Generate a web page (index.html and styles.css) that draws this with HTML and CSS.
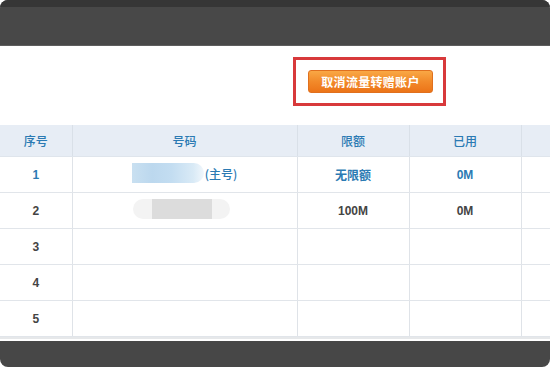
FILE: index.html
```html
<!DOCTYPE html>
<html lang="zh">
<head>
<meta charset="utf-8">
<title>流量转赠</title>
<link rel="stylesheet" href="styles.css">
</head>
<body>
<div class="frame">
  <div class="topbar"><div class="topstrip"></div></div>
  <div class="content">
    <div class="actions">
      <div class="highlight">
        <button class="btn-cancel" type="button">取消流量转赠账户</button>
      </div>
    </div>
    <table class="grid">
      <colgroup>
        <col class="c1"><col class="c2"><col class="c3"><col class="c4"><col class="c5">
      </colgroup>
      <thead>
        <tr><th>序号</th><th>号码</th><th>限额</th><th>已用</th><th></th></tr>
      </thead>
      <tbody>
        <tr class="main">
          <td>1</td>
          <td><span class="num"><span class="blur blue"></span><span class="tag">(主号)</span></span></td>
          <td>无限额</td>
          <td>0M</td>
          <td></td>
        </tr>
        <tr>
          <td>2</td>
          <td><span class="num"><span class="blur grey"><span class="blur-inner"></span></span></span></td>
          <td>100M</td>
          <td>0M</td>
          <td></td>
        </tr>
        <tr><td>3</td><td></td><td></td><td></td><td></td></tr>
        <tr><td>4</td><td></td><td></td><td></td><td></td></tr>
        <tr><td>5</td><td></td><td></td><td></td><td></td></tr>
      </tbody>
    </table>
    <div class="tablefoot"></div>
  </div>
  <div class="bottombar"></div>
</div>
</body>
</html>
```

FILE: styles.css
```css
html, body {
  margin: 0;
  padding: 0;
  background: #ffffff;
  overflow: hidden;
}

body {
  font-family: "Liberation Sans", "Noto Sans CJK SC", sans-serif;
  width: 550px;
  height: 367px;
}

.frame {
  width: 550px;
  height: 367px;
  display: flex;
  flex-direction: column;
  overflow: hidden;
}

.topbar {
  height: 45px;
  background: #484848;
  border-bottom: 1px solid #5e5e5e;
  border-radius: 8px 8px 0 0;
  overflow: hidden;
  flex: none;
}

.topstrip {
  height: 7px;
  background: #363636;
}

.content {
  flex: 1;
  background: #ffffff;
  display: flex;
  flex-direction: column;
}

.actions {
  height: 79px;
  padding: 11px 0 0 293px;
  box-sizing: border-box;
  display: flex;
  align-items: flex-start;
}

.highlight {
  width: 153px;
  height: 49px;
  box-sizing: border-box;
  border: 3px solid #d8393b;
  display: flex;
  align-items: center;
  padding-left: 12px;
}

.btn-cancel {
  width: 125px;
  height: 23px;
  border: 1px solid #e0701e;
  border-radius: 3px;
  background: linear-gradient(#f9a845, #f28a2a 50%, #ec7418);
  color: #ffffff;
  font-family: "Noto Sans CJK SC", sans-serif;
  font-weight: bold;
  font-size: 12px;
  padding: 0;
  letter-spacing: 0.3px;
  line-height: 21px;
}

.grid {
  width: 560px;
  table-layout: fixed;
  border-collapse: collapse;
  font-size: 12px;
}

.c1 { width: 72px; }
.c2 { width: 225px; }
.c3 { width: 112px; }
.c4 { width: 112px; }
.c5 { width: 39px; }

.grid th {
  height: 31px;
  background: #e7edf5;
  color: #2b7ab3;
  font-family: "Noto Sans CJK SC", sans-serif;
  font-weight: 500;
  font-size: 12px;
  border-right: 1px solid #d9e0e8;
  border-bottom: 1px solid #dfe5ec;
  padding: 0;
}

.grid td {
  height: 35px;
  text-align: center;
  color: #444444;
  font-weight: bold;
  border-right: 1px solid #dfe3e8;
  border-bottom: 1px solid #e1e5ea;
  padding: 0;
  font-family: "Liberation Sans", "Noto Sans CJK SC", sans-serif;
}

.grid tr.main td {
  color: #2b7ab3;
}

.num {
  display: inline-flex;
  align-items: center;
}

.blur {
  display: inline-block;
  height: 20px;
  border-radius: 10px;
}

.blur.blue {
  width: 72px;
  background: linear-gradient(90deg, #c9e0f1 0, #bcd8ee 28%, #c3ddf1 55%, #d9eaf6 85%, #f1f7fc 100%);
  border-radius: 0 12px 12px 0;
}

.blur.grey {
  width: 97px;
  background: #f3f3f3;
  display: inline-flex;
  justify-content: center;
  align-items: center;
  margin-right: 6px;
}

.blur-inner {
  width: 60px;
  height: 20px;
  background: #dcdcdc;
}

.tag {
  font-family: "Noto Sans CJK SC", sans-serif;
  font-weight: 500;
  color: #2b7ab3;
  font-size: 12px;
  margin-left: 1px;
}

.tablefoot {
  flex: 1;
  border-top: 2px solid #e6e8ea;
  margin-top: 0;
}

.bottombar {
  height: 26px;
  background: #474747;
  border-radius: 0 0 8px 8px;
  flex: none;
}
```
